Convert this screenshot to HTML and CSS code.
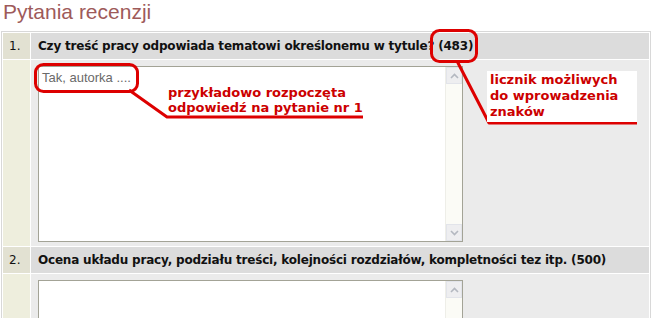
FILE: index.html
```html
<!DOCTYPE html>
<html lang="pl">
<head>
    <meta charset="UTF-8">
    <title>Pytania recenzji</title>
    <link rel="stylesheet" href="styles.css">
</head>
<body>
    <h2 class="title">Pytania recenzji</h2>

    <table class="questions">
        <tr class="q-head">
            <td class="num">1.</td>
            <td class="q-text">Czy treść pracy odpowiada tematowi określonemu w tytule? (483)</td>
        </tr>
        <tr class="q-body">
            <td class="num"></td>
            <td class="q-answer">
                <div class="answer">
                    <textarea>Tak, autorka ....</textarea>
                    <div class="scroll">
                        <span class="scroll-btn"><svg width="9" height="6" viewBox="0 0 9 6"><path d="M1 5 L4.5 1.5 L8 5" fill="none" stroke="#b4b8c0" stroke-width="1.6"/></svg></span>
                        <span class="scroll-btn"><svg width="9" height="6" viewBox="0 0 9 6"><path d="M1 1 L4.5 4.5 L8 1" fill="none" stroke="#b4b8c0" stroke-width="1.6"/></svg></span>
                    </div>
                </div>
            </td>
        </tr>
        <tr class="q-head">
            <td class="num">2.</td>
            <td class="q-text">Ocena układu pracy, podziału treści, kolejności rozdziałów, kompletności tez itp. (500)</td>
        </tr>
        <tr class="q-body">
            <td class="num"></td>
            <td class="q-answer">
                <div class="answer">
                    <textarea></textarea>
                    <div class="scroll">
                        <span class="scroll-btn"><svg width="9" height="6" viewBox="0 0 9 6"><path d="M1 5 L4.5 1.5 L8 5" fill="none" stroke="#b4b8c0" stroke-width="1.6"/></svg></span>
                        <span class="scroll-btn"><svg width="9" height="6" viewBox="0 0 9 6"><path d="M1 1 L4.5 4.5 L8 1" fill="none" stroke="#b4b8c0" stroke-width="1.6"/></svg></span>
                    </div>
                </div>
            </td>
        </tr>
    </table>

    <!-- annotations drawn over the screenshot -->
    <svg class="marks" width="653" height="318" viewBox="0 0 653 318">
        <rect x="431.5" y="30.5" width="45" height="31" rx="8" fill="none" stroke="#dd0000" stroke-width="3"/>
        <polyline points="457,61 489,123 637,123" fill="none" stroke="#dd0000" stroke-width="3" stroke-linejoin="round"/>
        <rect x="35.5" y="64.5" width="102" height="27" rx="8" fill="none" stroke="#dd0000" stroke-width="3"/>
        <polyline points="129,90 167,117 363,117" fill="none" stroke="#dd0000" stroke-width="3" stroke-linejoin="round"/>
    </svg>
    <p class="note note-start">przykładowo rozpoczęta<br>odpowiedź na pytanie nr 1</p>
    <p class="note note-count">licznik możliwych<br>do wprowadzenia<br>znaków</p>
</body>
</html>
```

FILE: styles.css
```css
html {
    overflow: hidden;
}

body {
    margin: 0;
    background: #fff;
    font-family: 'DejaVu Sans', Verdana, sans-serif;
    font-size: 12px;
    color: #111;
    position: relative;
    width: 653px;
    height: 318px;
    overflow: hidden;
}

.title {
    font-family: 'Liberation Sans', Arial, sans-serif;
    font-weight: normal;
    font-size: 21px;
    line-height: 24px;
    color: #9e5a5a;
    margin: 0 0 7px 3px;
}

.questions {
    margin-left: 1px;
    width: 650px;
    border: 1px solid #d8d8d8;
    border-spacing: 1px;
}

.questions td {
    padding: 0;
}

.num {
    width: 27px;
    padding-left: 6px !important;
    box-sizing: border-box;
    background-color: #eeeedd;
}

.q-head td {
    height: 26px;
    vertical-align: middle;
}

.q-head .num {
    background-color: #e2e1d2;
    font-size: 12px;
}

.q-text {
    background-color: #dcdcdc;
    font-weight: bold;
    padding-left: 7px !important;
    letter-spacing: -0.2px;
}

.q-body td {
    height: 180px;
    vertical-align: top;
}

.q-answer {
    background-color: #ebebeb;
    padding: 6px 0 0 7px !important;
}

.answer {
    display: flex;
    width: 425px;
    height: 176px;
    box-sizing: border-box;
    border: 1px solid #a3a396;
    background: #fff;
}

.answer textarea {
    flex: 1;
    border: none;
    resize: none;
    outline: none;
    margin: 0;
    padding: 3px 3px;
    font-family: 'Liberation Sans', Arial, sans-serif;
    font-size: 13px;
    line-height: 15px;
    color: #6a6a6a;
    overflow: hidden;
}

.scroll {
    width: 16px;
    display: flex;
    flex-direction: column;
    justify-content: space-between;
    background: #fbfbf6;
    border-left: 1px solid #eeeee8;
}

.scroll-btn {
    height: 15px;
    display: flex;
    align-items: center;
    justify-content: center;
    background: #eeeef0;
    border: 1px solid #e2e4ea;
}

.marks {
    position: absolute;
    top: 0;
    left: 0;
    pointer-events: none;
}

.note {
    position: absolute;
    margin: 0;
    color: #cc0000;
    font-weight: bold;
    font-size: 13px;
    white-space: nowrap;
}

.note-start {
    left: 168px;
    top: 85px;
    line-height: 15px;
}

.note-count {
    left: 487px;
    top: 71px;
    width: 147px;
    height: 50px;
    padding: 1px 0 0 3px;
    line-height: 16px;
    background: #fff;
}
```
